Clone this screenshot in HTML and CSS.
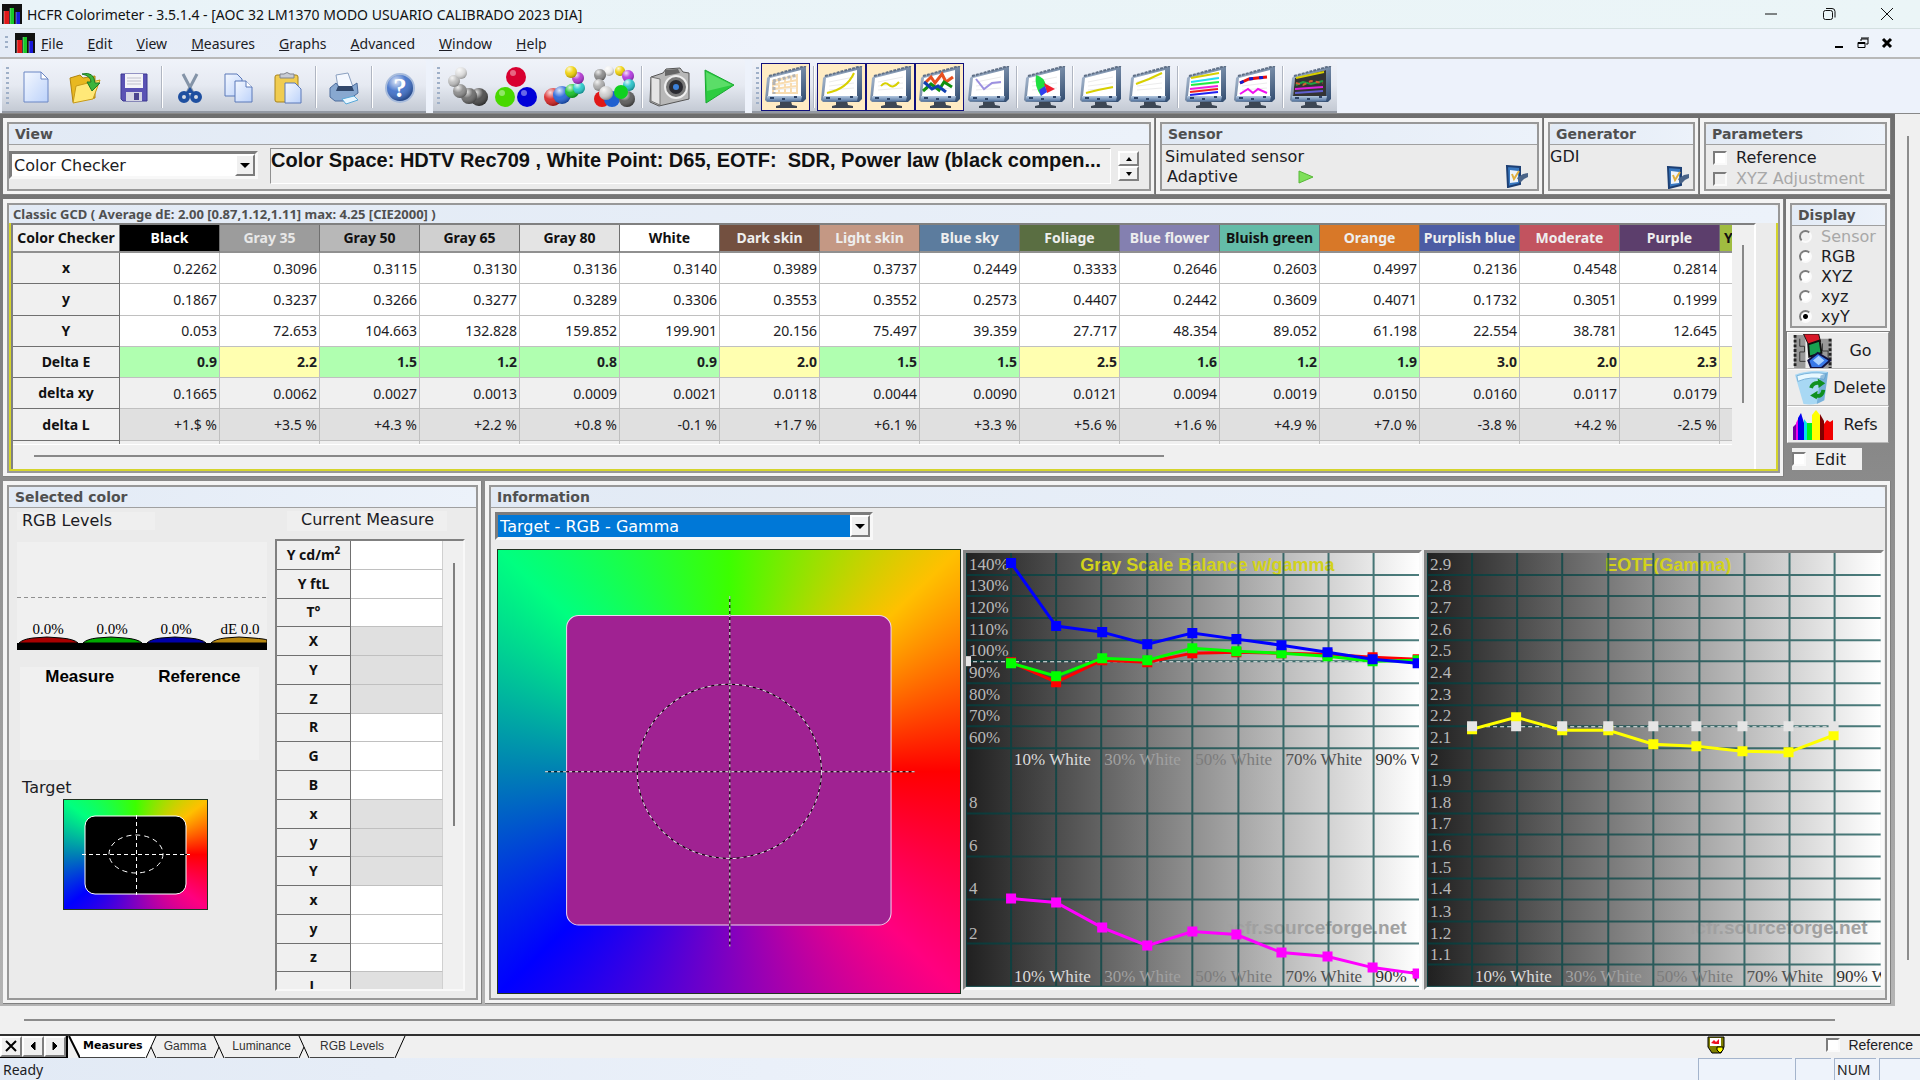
FILE: index.html
```html
<!DOCTYPE html>
<html lang="en">

<head>
	<meta charset="utf-8">
	<title>HCFR Colorimeter</title>
	<link rel="stylesheet" href="styles.css">
</head>

<body>

	<!-- shared drawings -->
	<svg class="defs" width="0" height="0" aria-hidden="true">
		<defs>
			<linearGradient id="steel" x1="0" y1="0" x2="1" y2="1">
				<stop offset="0" stop-color="#b9c9dd" />
				<stop offset="1" stop-color="#2f4a6e" />
			</linearGradient>
			<linearGradient id="bezel" x1="0" y1="0" x2="0" y2="1">
				<stop offset="0" stop-color="#b4c8e0" />
				<stop offset="1" stop-color="#5878a2" />
			</linearGradient>
			<linearGradient id="paper" x1="0" y1="0" x2="1" y2="1">
				<stop offset="0" stop-color="#f4f8ff" />
				<stop offset="1" stop-color="#bcd2fa" />
			</linearGradient>
			<linearGradient id="ramp">
				<stop offset="0" stop-color="#202020" />
				<stop offset="1" stop-color="#ffffff" />
			</linearGradient>
			<radialGradient id="shine" cx="0.35" cy="0.25" r="0.75">
				<stop offset="0" stop-color="#fff" stop-opacity="0.85" />
				<stop offset="0.5" stop-color="#fff" stop-opacity="0.1" />
				<stop offset="1" stop-color="#000" stop-opacity="0.3" />
			</radialGradient>
			<symbol id="logo" viewBox="0 0 20 20">
				<rect width="20" height="20" fill="#111" />
				<rect x="2" y="7" width="5" height="13" fill="#e01818" />
				<rect x="8" y="4" width="4" height="16" fill="#18c828" />
				<rect x="14" y="8" width="4" height="12" fill="#1818d8" />
				<path d="M2 7v13M8 4v16M14 8v12" stroke="#fff" stroke-opacity="0.4" />
			</symbol>
			<symbol id="monitor" viewBox="0 0 42 42">
				<path d="M15 35h11l1 4 5 1v2H11v-2l4-1z" fill="#3c4654" />
				<path d="M4 10L37 1l4-1v33l-3 3H2l-2-2 2-22z" fill="url(#steel)" />
				<path d="M4 10L37 1l4-1" fill="none" stroke="#5f6f86" stroke-width="2" stroke-dasharray="3 1" />
				<path d="M5 12L36 4v26H3z" fill="#fff" />
				<path d="M2 30h35l-1 5H2z" fill="url(#bezel)" />
				<path d="M5 32h4M17 33h3M29 31h3" stroke="#2c4366" stroke-width="2" />
				<path d="M8 16l25-5M8 20l25-3M8 24l25-2" stroke="#ececec" fill="none" />
			</symbol>
			<symbol id="device" viewBox="0 0 24 24">
				<path d="M2 2l13 1v17L3 23z" fill="#3878c0" stroke="#1c3f74" stroke-width="2" />
				<path d="M5 6l8 1v11l-8 1z" fill="#eef4fb" />
				<path d="M7 10l2 5 5-8" fill="none" stroke="#e0b040" stroke-width="2" />
				<path d="M12 14l6-4 5-1v4l-4 2-4 4z" fill="#4a6488" />
			</symbol>
		</defs>
	</svg>

	<header class="titlebar">
		<svg class="logo"><use href="#logo" /></svg>
		<h1>HCFR Colorimeter - 3.5.1.4 - [AOC 32 LM1370 MODO USUARIO CALIBRADO 2023 DIA]</h1>
		<div class="window-btns">
			<button aria-label="Minimize"><svg width="14" height="14"><path d="M1 7h12" stroke="#111" /></svg></button>
			<button aria-label="Restore"><svg width="14" height="14" fill="none" stroke="#111"><rect x="1.500" y="3.500" width="9" height="9" rx="2" /><path d="M4 1.500h6q3 0 3 3v6" /></svg></button>
			<button aria-label="Close"><svg width="14" height="14"><path d="M1 1l12 12M13 1L1 13" stroke="#111" /></svg></button>
		</div>
	</header>

	<nav class="menubar">
		<span class="grip"></span>
		<svg class="logo"><use href="#logo" /></svg>
		<a href="#"><u>F</u>ile</a>
		<a href="#"><u>E</u>dit</a>
		<a href="#"><u>V</u>iew</a>
		<a href="#"><u>M</u>easures</a>
		<a href="#"><u>G</u>raphs</a>
		<a href="#"><u>A</u>dvanced</a>
		<a href="#"><u>W</u>indow</a>
		<a href="#"><u>H</u>elp</a>
		<div class="mdi-btns">
			<button aria-label="Minimize document"><svg width="12" height="12"><path d="M2 10h8" stroke="#000" stroke-width="2" /></svg></button>
			<button aria-label="Restore document"><svg width="12" height="12" fill="none" stroke="#000"><path d="M4 4V2h7v5H9M4 1h8" /><path d="M1 5.500h7v5H1zM1 6.500h7" /></svg></button>
			<button aria-label="Close document"><svg width="12" height="12"><path d="M2 2l8 8M10 2l-8 8" stroke="#000" stroke-width="3" /></svg></button>
		</div>
	</nav>

	<div class="toolbar">
		<div class="tools">
			<span class="grip"></span>
			<button aria-label="New"><svg class="ico" viewBox="0 0 42 42"><path d="M9 6h17l7 7v23H9z" fill="url(#paper)" stroke="#6b86c4" /><path d="M26 6v7h7z" fill="#fff" stroke="#6b86c4" /></svg></button>
			<button aria-label="Open"><svg class="ico" viewBox="0 0 42 42"><path d="M6 12l10-3 3 3 12-2v22L9 36z" fill="#e8b820" stroke="#b08410" /><path d="M12 20l24-6-7 19-20 4z" fill="#ffe878" stroke="#c89a18" /><path d="M18 8q12-3 13 9h5l-8 8-5-9h4q0-6-9-8z" fill="#3cb43c" stroke="#1f7a24" /></svg></button>
			<button aria-label="Save"><svg class="ico" viewBox="0 0 42 42"><path d="M8 8h26v27H10l-2-2z" fill="#5a52b4" stroke="#3b3690" /><rect x="12" y="8" width="18" height="14" fill="#f4f4f8" /><path d="M14 12h14M14 15h14M14 18h14" stroke="#c0c0cc" /><rect x="13" y="26" width="16" height="9" fill="#d4d4e4" /><rect x="21" y="27" width="5" height="7" fill="#4a4490" /></svg></button>
			<span class="sep"></span>
			<button aria-label="Cut"><svg class="ico" viewBox="0 0 42 42"><path d="M14 8l10 19M28 8L18 27" stroke="#8494a8" stroke-width="3" /><g fill="none" stroke="#1e4fa0" stroke-width="4"><ellipse cx="15" cy="31" rx="4" ry="4" /><ellipse cx="27" cy="31" rx="4" ry="4" /></g><path d="M21 21l4 6h-8z" fill="#1e4fa0" /></svg></button>
			<button aria-label="Copy"><svg class="ico" viewBox="0 0 42 42"><path d="M7 8h12l5 5v17H7z" fill="url(#paper)" stroke="#5a78b8" /><path d="M17 15h11l6 6v15H17z" fill="url(#paper)" stroke="#5a78b8" /><path d="M28 15v6h6" fill="#fff" stroke="#5a78b8" /></svg></button>
			<button aria-label="Paste"><svg class="ico" viewBox="0 0 42 42"><rect x="8" y="9" width="23" height="27" rx="2" fill="#f0cc50" stroke="#a8841c" /><path d="M13 12V8h4q3-3 6 0h4v4z" fill="#c8ccd4" stroke="#80848c" /><path d="M18 17h10l6 6v14H18z" fill="url(#paper)" stroke="#5a78b8" /></svg></button>
			<span class="sep"></span>
			<button aria-label="Print"><svg class="ico" viewBox="0 0 42 42"><path d="M13 9l12-2 5 14H15z" fill="#f4f8ff" stroke="#8aa0c0" /><path d="M7 22l6-5 3 4h12l6-4 1 10-11 8H12l-5-4z" fill="#88a8d0" stroke="#4d6c9c" /><path d="M15 20h14l2 5H13z" fill="#31486c" /><path d="M19 33l12-3 4 4-12 4z" fill="#e8f6ff" stroke="#58a8d8" /></svg></button>
			<span class="sep"></span>
			<button aria-label="Help"><svg class="ico" viewBox="0 0 42 42"><circle cx="21" cy="22" r="14" fill="#3a6cc8" stroke="#a8bcdc" stroke-width="2" /><circle cx="21" cy="22" r="13" fill="url(#shine)" /><text x="21" y="31" class="help-mark">?</text></svg></button>
		</div>
		<div class="tools">
			<span class="grip"></span>
			<button aria-label="Measure grays"><svg class="ico" viewBox="0 0 42 42"><g fill="#444"><circle cx="33" cy="31" r="9" /></g><circle cx="33" cy="31" r="9" fill="url(#shine)" /><circle cx="23" cy="30" r="8" fill="#666" /><circle cx="23" cy="30" r="8" fill="url(#shine)" /><circle cx="14" cy="25" r="7" fill="#888" /><circle cx="14" cy="25" r="7" fill="url(#shine)" /><circle cx="8" cy="15" r="6" fill="#bbb" /><circle cx="8" cy="15" r="6" fill="url(#shine)" /><circle cx="15" cy="7" r="6" fill="#ddd" /><circle cx="15" cy="7" r="6" fill="url(#shine)" /></svg></button>
			<button aria-label="Measure primaries"><svg class="ico" viewBox="0 0 42 42"><circle cx="21" cy="11" r="10" fill="#d80030" /><circle cx="10" cy="31" r="10" fill="#48d800" /><circle cx="32" cy="31" r="10" fill="#0000d8" /><g fill="#fff" fill-opacity="0.4"><circle cx="18" cy="7" r="3" /><circle cx="7" cy="27" r="3" /><circle cx="29" cy="27" r="3" /></g></svg></button>
			<button aria-label="Measure secondaries"><svg class="ico" viewBox="0 0 42 42"><circle cx="9" cy="31" r="9" fill="#d82020" /><circle cx="9" cy="31" r="9" fill="url(#shine)" /><circle cx="18" cy="29" r="9" fill="#2060d8" /><circle cx="18" cy="29" r="9" fill="url(#shine)" /><circle cx="28" cy="25" r="7" fill="#10c020" /><circle cx="28" cy="25" r="7" fill="url(#shine)" /><circle cx="35" cy="22" r="6" fill="#20c8c8" /><circle cx="35" cy="22" r="6" fill="url(#shine)" /><circle cx="34" cy="12" r="6" fill="#b030d0" /><circle cx="34" cy="12" r="6" fill="url(#shine)" /><circle cx="27" cy="6" r="6" fill="#f0d000" /><circle cx="27" cy="6" r="6" fill="url(#shine)" /></svg></button>
			<button aria-label="Measure all"><svg class="ico" viewBox="0 0 42 42"><circle cx="16" cy="5" r="5" fill="#eee" /><circle cx="16" cy="5" r="5" fill="url(#shine)" /><circle cx="7" cy="9" r="6" fill="#888" /><circle cx="7" cy="9" r="6" fill="url(#shine)" /><circle cx="6" cy="19" r="6" fill="#aaa" /><circle cx="6" cy="19" r="6" fill="url(#shine)" /><circle cx="27" cy="5" r="5" fill="#f0d000" /><circle cx="27" cy="5" r="5" fill="url(#shine)" /><circle cx="35" cy="10" r="6" fill="#b030e0" /><circle cx="35" cy="10" r="6" fill="url(#shine)" /><circle cx="36" cy="19" r="6" fill="#20c0c8" /><circle cx="36" cy="19" r="6" fill="url(#shine)" /><circle cx="9" cy="33" r="8" fill="#e01818" /><circle cx="19" cy="33" r="8" fill="#2060d0" /><circle cx="34" cy="33" r="8" fill="#555" /><circle cx="34" cy="33" r="8" fill="url(#shine)" /><circle cx="13" cy="27" r="7" fill="#ccc" /><circle cx="13" cy="27" r="7" fill="url(#shine)" /><circle cx="28" cy="26" r="7" fill="#10d020" /></svg></button>
			<span class="sep"></span>
			<button aria-label="Snapshot"><svg class="ico" viewBox="0 0 42 42"><path d="M2 11l12-4 3-4 14-1 3 4 6 1v26l-30 7-9-4z" fill="#b8b8b8" stroke="#555" /><path d="M2 11l9 2v26l-9-4z" fill="#e4e4e4" stroke="#777" /><path d="M16 4l13-1 2 4-15 3z" fill="#666" /><circle cx="27" cy="21" r="11" fill="#777" stroke="#eee" stroke-width="2" /><circle cx="27" cy="21" r="7" fill="#2a2a30" /><circle cx="27" cy="21" r="3" fill="#3c80d8" /></svg></button>
			<button aria-label="Run"><svg class="ico" viewBox="0 0 42 42"><path d="M7 4l29 15-28 18z" fill="#2ccc40" stroke="#18a830" /><path d="M8 6l26 13L9 25z" fill="#7ce884" fill-opacity="0.6" /></svg></button>
		</div>
		<div class="tools">
			<span class="grip"></span>
			<button class="on" aria-label="Measures view"><svg class="ico" viewBox="0 0 42 42"><use href="#monitor" /><path d="M8 15l24-6v18H8zM8 19l24-5M8 23l24-3M14 14v13M20 12v15M26 11v16" fill="none" stroke="#f8dcb0" stroke-width="2" /><path d="M8 15l24-6M9 16v12" stroke="#b4b4b4" stroke-width="3" stroke-dasharray="3 2" /></svg></button>
			<span class="sep"></span>
			<button class="on" aria-label="Luminance"><svg class="ico" viewBox="0 0 42 42"><use href="#monitor" /><path d="M6 27q20-4 27-20" fill="none" stroke="#d8d000" stroke-width="2" /></svg></button>
			<button class="on" aria-label="Gamma"><svg class="ico" viewBox="0 0 42 42"><use href="#monitor" /><path d="M11 20q4-5 8-1t10-3" fill="none" stroke="#d8d000" stroke-width="2" /></svg></button>
			<button class="on" aria-label="RGB levels"><svg class="ico" viewBox="0 0 42 42"><use href="#monitor" /><path d="M6 17l6-6 4 6 7-9 4 8 7-5" fill="none" stroke="#e85020" stroke-width="3" /><path d="M4 25l8-7 8 6 5-8 8 5" fill="none" stroke="#109010" stroke-width="3" /><path d="M5 16l8 7 6-3 8 6" fill="none" stroke="#1040b0" stroke-width="3" /></svg></button>
			<button aria-label="Color temperature"><svg class="ico" viewBox="0 0 42 42"><use href="#monitor" /><path d="M8 13l8 10 8-6 9-1" fill="none" stroke="#9c90e0" stroke-width="2" /></svg></button>
			<span class="sep"></span>
			<button aria-label="CIE diagram"><svg class="ico" viewBox="0 0 42 42"><use href="#monitor" /><path d="M12 9q8 2 10 10L17 30q-7-10-5-21z" fill="#20e040" /><path d="M20 17l11 6-8 4z" fill="#f02030" /><path d="M15 24l6-4 2 6-6 4z" fill="#3040f0" /></svg></button>
			<span class="sep"></span>
			<button aria-label="Near black"><svg class="ico" viewBox="0 0 42 42"><use href="#monitor" /><path d="M6 27l12-3 15-3" fill="none" stroke="#d8d000" stroke-width="2" /></svg></button>
			<button aria-label="Near white"><svg class="ico" viewBox="0 0 42 42"><use href="#monitor" /><path d="M7 18l13-5 13-6" fill="none" stroke="#d8d000" stroke-width="2" /></svg></button>
			<span class="sep"></span>
			<button aria-label="Saturation luminance"><svg class="ico" viewBox="0 0 42 42"><use href="#monitor" /><g fill="none" stroke-width="2"><path d="M6 12l28-5" stroke="#d8d000" /><path d="M6 16l28-4" stroke="#20e0f0" /><path d="M6 19l28-3" stroke="#20f040" /><path d="M5 23l28-3" stroke="#f020e0" /><path d="M5 26l28-3" stroke="#f02020" /><path d="M5 29l28-3" stroke="#2020f0" /></g></svg></button>
			<button aria-label="Saturation shift"><svg class="ico" viewBox="0 0 42 42"><use href="#monitor" /><path d="M6 17l9-4 8-1 10-1" fill="none" stroke="#e81010" stroke-width="3" /><path d="M6 17l9-4 8-1 10-1" fill="none" stroke="#1020d0" stroke-width="3" stroke-dasharray="4 6" /><path d="M6 28l8-5 5 4 5-4 9 4" fill="none" stroke="#f010f0" stroke-width="2" /></svg></button>
			<span class="sep"></span>
			<button aria-label="Combined graphs"><svg class="ico" viewBox="0 0 42 42"><use href="#monitor" /><path d="M5 12L36 4v26H3z" fill="#333" /><g fill="none" stroke-width="2"><path d="M6 12l28-6" stroke="#d8d000" /><path d="M6 19l7-3 8 2 12-3" stroke="#20a040" /><path d="M6 17l7 2 8-4 12 2" stroke="#d06030" stroke-dasharray="4 3" /><path d="M5 23l28-2" stroke="#e020e0" /><path d="M5 27l28-2" stroke="#6060d0" /></g></svg></button>
		</div>
	</div>

	<div class="main">
		<div class="work">

			<div class="row-top">
				<section class="panel">
					<div class="group">
						<h2>View</h2>
						<div class="view-body">
							<div class="combo">
								<select aria-label="View"><option>Color Checker</option></select>
								<span class="combo-btn"><svg width="10" height="5"><path d="M0 0h10L5 5z" /></svg></span>
							</div>
							<p class="space-info">Color Space: HDTV Rec709 , White Point: D65, EOTF:&nbsp; SDR, Power law (black compen...</p>
							<div class="spin">
								<button aria-label="Up"><svg width="6" height="4"><path d="M0 4h6L3 0z" /></svg></button>
								<button aria-label="Down"><svg width="6" height="4"><path d="M0 0h6L3 4z" /></svg></button>
							</div>
						</div>
					</div>
				</section>
				<section class="panel">
					<div class="group">
						<h2>Sensor</h2>
						<div class="device-body">
							<div class="device-text">
								<p>Simulated sensor</p>
								<p class="adaptive">Adaptive <svg width="16" height="14"><path d="M1 1l14 6-14 6z" fill="#7ee05a" stroke="#58b838" /></svg></p>
							</div>
							<button class="flat" aria-label="Configure sensor"><svg width="24" height="24"><use href="#device" /></svg></button>
						</div>
					</div>
				</section>
				<section class="panel">
					<div class="group">
						<h2>Generator</h2>
						<div class="device-body gen-body">
							<div class="device-text">
								<p>GDI</p>
							</div>
							<button class="flat" aria-label="Configure generator"><svg width="24" height="24"><use href="#device" /></svg></button>
						</div>
					</div>
				</section>
				<section class="panel">
					<div class="group">
						<h2>Parameters</h2>
						<div class="param-body">
							<label><input type="checkbox"> Reference</label>
							<label class="off"><input type="checkbox" disabled> XYZ Adjustment</label>
						</div>
					</div>
				</section>
			</div>

			<div class="row-mid">
				<section class="panel">
					<div class="group">
						<h2 class="small">Classic GCD ( Average dE: 2.00 [0.87,1.12,1.11] max: 4.25 [CIE2000] )</h2>
						<div class="grid-body">
							<div class="grid-frame">
								<div class="grid-view">
									<table class="measures">
										<thead>
											<tr>
												<th>Color Checker</th>
												<th class="c-black">Black</th>
												<th class="c-g35">Gray 35</th>
												<th class="c-g50">Gray 50</th>
												<th class="c-g65">Gray 65</th>
												<th class="c-g80">Gray 80</th>
												<th class="c-white">White</th>
												<th class="c-dark">Dark skin</th>
												<th class="c-light">Light skin</th>
												<th class="c-sky">Blue sky</th>
												<th class="c-fol">Foliage</th>
												<th class="c-flower">Blue flower</th>
												<th class="c-bluish">Bluish green</th>
												<th class="c-orange">Orange</th>
												<th class="c-purplish">Purplish blue</th>
												<th class="c-mod">Moderate</th>
												<th class="c-purple">Purple</th>
												<th class="c-yg">Y</th>
											</tr>
										</thead>
										<tbody>
											<tr><th>x</th><td>0.2262</td><td>0.3096</td><td>0.3115</td><td>0.3130</td><td>0.3136</td><td>0.3140</td><td>0.3989</td><td>0.3737</td><td>0.2449</td><td>0.3333</td><td>0.2646</td><td>0.2603</td><td>0.4997</td><td>0.2136</td><td>0.4548</td><td>0.2814</td><td></td></tr>
											<tr><th>y</th><td>0.1867</td><td>0.3237</td><td>0.3266</td><td>0.3277</td><td>0.3289</td><td>0.3306</td><td>0.3553</td><td>0.3552</td><td>0.2573</td><td>0.4407</td><td>0.2442</td><td>0.3609</td><td>0.4071</td><td>0.1732</td><td>0.3051</td><td>0.1999</td><td></td></tr>
											<tr><th>Y</th><td>0.053</td><td>72.653</td><td>104.663</td><td>132.828</td><td>159.852</td><td>199.901</td><td>20.156</td><td>75.497</td><td>39.359</td><td>27.717</td><td>48.354</td><td>89.052</td><td>61.198</td><td>22.554</td><td>38.781</td><td>12.645</td><td></td></tr>
											<tr class="delta-e"><th>Delta E</th><td>0.9</td><td class="warn">2.2</td><td>1.5</td><td>1.2</td><td>0.8</td><td>0.9</td><td class="warn">2.0</td><td>1.5</td><td>1.5</td><td class="warn">2.5</td><td>1.6</td><td>1.2</td><td>1.9</td><td class="warn">3.0</td><td class="warn">2.0</td><td class="warn">2.3</td><td class="warn"></td></tr>
											<tr class="pale"><th>delta xy</th><td>0.1665</td><td>0.0062</td><td>0.0027</td><td>0.0013</td><td>0.0009</td><td>0.0021</td><td>0.0118</td><td>0.0044</td><td>0.0090</td><td>0.0121</td><td>0.0094</td><td>0.0019</td><td>0.0150</td><td>0.0160</td><td>0.0117</td><td>0.0179</td><td></td></tr>
											<tr class="dim"><th>delta L</th><td>+1.$ %</td><td>+3.5 %</td><td>+4.3 %</td><td>+2.2 %</td><td>+0.8 %</td><td>-0.1 %</td><td>+1.7 %</td><td>+6.1 %</td><td>+3.3 %</td><td>+5.6 %</td><td>+1.6 %</td><td>+4.9 %</td><td>+7.0 %</td><td>-3.8 %</td><td>+4.2 %</td><td>-2.5 %</td><td></td></tr>
											<tr class="pale"><th></th><td></td><td></td><td></td><td></td><td></td><td></td><td></td><td></td><td></td><td></td><td></td><td></td><td></td><td></td><td></td><td></td><td></td></tr>
										</tbody>
									</table>
								</div>
								<div class="grid-vscroll"><span></span></div>
								<div class="grid-hscroll"><span></span></div>
							</div>
						</div>
					</div>
				</section>
				<aside class="side">
					<div class="panel">
						<fieldset class="group">
							<h2>Display</h2>
							<div class="radio-body">
								<label class="off"><input type="radio" name="display" disabled> Sensor</label>
								<label><input type="radio" name="display"> RGB</label>
								<label><input type="radio" name="display"> XYZ</label>
								<label><input type="radio" name="display"> xyz</label>
								<label><input type="radio" name="display" checked> xyY</label>
							</div>
						</fieldset>
					</div>
					<button class="side-btn"><svg width="40" height="34" viewBox="0 0 40 36"><path d="M0 1h12v35H0zM28 5h12v31H28z" fill="#999" /><path d="M1 1v35M38 5v31" stroke="#222" stroke-width="3" stroke-dasharray="3 2" /><path d="M6 5v8h5v6H6v10h6M30 10v8h6v8h-6v8" fill="none" stroke="#333" /><path d="M10 0h16l2 8-13 3z" fill="#d81828" stroke="#111" /><path d="M15 11l12-4 2 13-13 4z" fill="#18a050" stroke="#111" stroke-width="2" /><path d="M15 28l10-8 13 8-9 8H18z" fill="#3878e8" stroke="#101040" stroke-width="2" /><path d="M20 28l6-5 6 5-6 5z" fill="#a8d0ff" /></svg><span>Go</span></button>
					<button class="side-btn"><svg width="38" height="34" viewBox="0 0 38 36"><path d="M1 4q16-6 35-3l-4 30q-9 6-22 4z" fill="#a8d8f4" /><path d="M3 5q16-5 31-2l-2 6q-14-4-28 2z" fill="#e8f8ff" stroke="#78b0d8" /><path d="M36 1l-4 30-8 4 4-30z" fill="#5898c8" fill-opacity="0.6" /><g fill="none" stroke="#109020" stroke-width="4"><path d="M18 18q2-7 10-5" /><path d="M31 20q-1 8-9 6" /></g><path d="M25 8l8 5-7 5zM25 21l-8 5 7 4z" fill="#109020" /></svg><span>Delete</span></button>
					<button class="side-btn"><svg width="40" height="30" viewBox="0 0 40 30"><path d="M0 30V17l3-3v16z" fill="#7000a0" /><path d="M3 30V13l2-4v21z" fill="#f000f0" /><path d="M5 30V8l3-5 3 10v17z" fill="#0000f0" /><path d="M11 30V9l3 4v17z" fill="#00e0f0" /><path d="M14 30V13h5v17z" fill="#00f020" /><path d="M19 30V5l4-5 4 5v25z" fill="#ff0" /><path d="M27 30V4l4 7v19z" fill="#800000" /><path d="M31 30V14l3-4 3 2 3-2v20z" fill="#f00000" /></svg><span>Refs</span></button>
					<label class="edit"><input type="checkbox"> Edit</label>
				</aside>
			</div>

			<div class="row-low">
				<section class="panel">
					<div class="group">
						<h2>Selected color</h2>
						<div class="sel-body">
							<div class="sel-left">
								<p class="tag rgb-tag">RGB Levels</p>
								<svg class="levels" viewBox="0 0 250 108">
									<path d="M0 55.500h250" stroke="#909090" stroke-dasharray="4 3" />
									<rect y="101" width="250" height="7" />
									<g stroke="#000">
										<path d="M2 101q4-4 14-5l14-1 14 1q13 1 17 5z" fill="#a80000" />
										<path d="M66 101q4-4 14-5l14-1 14 1q13 1 17 5z" fill="#00a800" />
										<path d="M130 101q4-4 14-5l14-1 14 1q13 1 17 5z" fill="#0000a8" />
										<path d="M194 101q4-4 14-5l14-1 14 1q13 1 14 2v3z" fill="#b88810" />
									</g>
									<g class="level-text">
										<text x="31" y="92">0.0%</text>
										<text x="95" y="92">0.0%</text>
										<text x="159" y="92">0.0%</text>
										<text x="223" y="92">dE 0.0</text>
									</g>
								</svg>
								<div class="compare"><span>Measure</span><span>Reference</span></div>
								<p class="tag">Target</p>
								<div class="wheel wheel-small">
									<svg viewBox="0 0 143 109" fill="none" stroke-width="1">
										<rect x="21" y="16" width="101" height="78" rx="10" fill="#000" stroke="#fff" />
										<path d="M18 54.500h108M72.500 15v80" stroke="#000" />
										<path d="M18 54.500h108M72.500 15v80" stroke="#fff" stroke-dasharray="4 3" />
										<ellipse cx="72" cy="54" rx="27" ry="19" stroke="#fff" stroke-dasharray="5 4" />
									</svg>
								</div>
							</div>
							<div class="sel-right">
								<p class="tag cur-tag">Current Measure</p>
								<div class="cur-frame">
									<div class="cur-view">
										<table class="current">
											<tbody>
												<tr><th>Y cd/m<sup>2</sup></th><td></td></tr>
												<tr><th>Y ftL</th><td></td></tr>
												<tr><th>T°</th><td></td></tr>
												<tr class="dim"><th>X</th><td></td></tr>
												<tr class="dim"><th>Y</th><td></td></tr>
												<tr class="dim"><th>Z</th><td></td></tr>
												<tr><th>R</th><td></td></tr>
												<tr><th>G</th><td></td></tr>
												<tr><th>B</th><td></td></tr>
												<tr class="dim"><th>x</th><td></td></tr>
												<tr class="dim"><th>y</th><td></td></tr>
												<tr class="dim"><th>Y</th><td></td></tr>
												<tr><th>x</th><td></td></tr>
												<tr><th>y</th><td></td></tr>
												<tr><th>z</th><td></td></tr>
												<tr class="dim"><th>L</th><td></td></tr>
											</tbody>
										</table>
									</div>
									<div class="cur-scroll"><span></span></div>
								</div>
							</div>
						</div>
					</div>
				</section>

				<section class="panel">
					<div class="group">
						<h2>Information</h2>
						<div class="info-body">
							<div class="combo combo-info">
								<select aria-label="Information"><option>Target - RGB - Gamma</option></select>
								<span class="combo-btn"><svg width="10" height="5"><path d="M0 0h10L5 5z" /></svg></span>
							</div>
							<div class="graphs">
								<div class="wheel">
									<svg viewBox="0 0 461 442" fill="none" stroke-width="1">
										<rect x="68.500" y="65.500" width="324" height="309" rx="12" fill="#a02292" stroke="#f0d8f0" />
										<path d="M47 221.500h369M231.500 46v350" stroke="#000" />
										<path d="M47 221.500h369M231.500 46v350" stroke="#fff" stroke-dasharray="3 3" />
										<ellipse cx="231" cy="221" rx="92" ry="87" stroke="#000" />
										<ellipse cx="231" cy="221" rx="92" ry="87" stroke="#f0d8f0" stroke-dasharray="4 3" />
									</svg>
								</div>

								<div class="chart">
									<svg viewBox="0 0 453 433">
										<rect width="453" height="433" fill="url(#ramp)" />
										<text class="mark" x="440" y="380">hcfr.sourceforge.net</text>
										<text class="chart-title" x="241" y="18">Gray Scale Balance w/gamma</text>
										<path class="lines" d="M0 22H453M0 43H453M0 65H453M0 87H453M0 108H453M0 130H453M0 152H453M0 173H453M0 195H453M0 260H453M0 303H453M0 346H453M0 390H453M0 433H453M0 0V433M45 0V433M90 0V433M135 0V433M181 0V433M226 0V433M272 0V433M317 0V433M362 0V433M407 0V433" />
										<g class="axis">
											<text x="3" y="17">140%</text>
											<text x="3" y="38">130%</text>
											<text x="3" y="60">120%</text>
											<text x="3" y="82">110%</text>
											<text x="3" y="103">100%</text>
											<text x="3" y="125">90%</text>
											<text x="3" y="147">80%</text>
											<text x="3" y="168">70%</text>
											<text x="3" y="190">60%</text>
											<text x="3" y="255">8</text>
											<text x="3" y="298">6</text>
											<text x="3" y="341">4</text>
											<text x="3" y="385">2</text>
											<text class="t10" x="48" y="212">10% White</text>
											<text class="t30" x="138" y="212">30% White</text>
											<text class="t50" x="229" y="212">50% White</text>
											<text class="t70" x="319" y="212">70% White</text>
											<text class="t90" x="409" y="212">90% W</text>
											<text class="t10" x="48" y="428">10% White</text>
											<text class="t30" x="138" y="428">30% White</text>
											<text class="t50" x="229" y="428">50% White</text>
											<text class="t70" x="319" y="428">70% White</text>
											<text class="t90" x="409" y="428">90% W</text>
										</g>
										<path d="M0 108.500H453" stroke="#f0f0f0" stroke-dasharray="4 3" />
										<rect y="103" width="5" height="10" fill="#e5e5e5" />
										<g class="serie red">
											<polyline points="45,109 90,129 136,107 181,109 226,100 270,99 315,100 361,101 406,104 451,106" />
											<path d="M40 104h10v10h-10zM85 124h10v10h-10zM131 102h10v10h-10zM176 104h10v10h-10zM221 95h10v10h-10zM265 94h10v10h-10zM310 95h10v10h-10zM356 96h10v10h-10zM401 99h10v10h-10zM446 101h10v10h-10z" />
										</g>
										<g class="serie green">
											<polyline points="45,110 90,123 136,105 181,107 226,95 270,98 315,100 361,103 406,108 451,107" />
											<path d="M40 105h10v10h-10zM85 118h10v10h-10zM131 100h10v10h-10zM176 102h10v10h-10zM221 90h10v10h-10zM265 93h10v10h-10zM310 95h10v10h-10zM356 98h10v10h-10zM401 103h10v10h-10zM446 102h10v10h-10z" />
										</g>
										<g class="serie blue">
											<polyline points="45,10 90,73 136,79 181,91 226,80 270,86 315,92 361,99 406,106 451,110" />
											<path d="M40 5h10v10h-10zM85 68h10v10h-10zM131 74h10v10h-10zM176 86h10v10h-10zM221 75h10v10h-10zM265 81h10v10h-10zM310 87h10v10h-10zM356 94h10v10h-10zM401 101h10v10h-10zM446 105h10v10h-10z" />
										</g>
										<g class="serie magenta">
											<polyline points="45,345 90,349 136,374 181,392 226,378 270,381 315,399 361,403 406,414 451,420" />
											<path d="M40 340h10v10h-10zM85 344h10v10h-10zM131 369h10v10h-10zM176 387h10v10h-10zM221 373h10v10h-10zM265 376h10v10h-10zM310 394h10v10h-10zM356 398h10v10h-10zM401 409h10v10h-10zM446 415h10v10h-10z" />
										</g>
									</svg>
								</div>

								<div class="chart">
									<svg viewBox="0 0 453 433">
										<rect width="453" height="433" fill="url(#ramp)" />
										<text class="mark" x="440" y="380">hcfr.sourceforge.net</text>
										<text class="chart-title" x="241" y="18">EOTF(Gamma)</text>
										<path class="lines" d="M0 22H453M0 43H453M0 65H453M0 87H453M0 108H453M0 130H453M0 152H453M0 173H453M0 195H453M0 217H453M0 238H453M0 260H453M0 281H453M0 303H453M0 325H453M0 346H453M0 368H453M0 390H453M0 411H453M0 433H453M0 0V433M45 0V433M90 0V433M135 0V433M181 0V433M226 0V433M272 0V433M317 0V433M362 0V433M407 0V433" />
										<g class="axis">
											<text x="3" y="17">2.9</text>
											<text x="3" y="38">2.8</text>
											<text x="3" y="60">2.7</text>
											<text x="3" y="82">2.6</text>
											<text x="3" y="103">2.5</text>
											<text x="3" y="125">2.4</text>
											<text x="3" y="147">2.3</text>
											<text x="3" y="168">2.2</text>
											<text x="3" y="190">2.1</text>
											<text x="3" y="212">2</text>
											<text x="3" y="233">1.9</text>
											<text x="3" y="255">1.8</text>
											<text x="3" y="276">1.7</text>
											<text x="3" y="298">1.6</text>
											<text x="3" y="320">1.5</text>
											<text x="3" y="341">1.4</text>
											<text x="3" y="363">1.3</text>
											<text x="3" y="385">1.2</text>
											<text x="3" y="406">1.1</text>
											<text class="t10" x="48" y="428">10% White</text>
											<text class="t30" x="138" y="428">30% White</text>
											<text class="t50" x="229" y="428">50% White</text>
											<text class="t70" x="319" y="428">70% White</text>
											<text class="t90" x="409" y="428">90% W</text>
										</g>
										<path d="M45 173.500H406" stroke="#f0f0f0" stroke-dasharray="4 3" />
										<g class="serie yellow">
											<polyline points="45,176 89,164 135,177 181,177 226,191 269,193 315,198 361,199 406,182" />
											<path d="M40 171h10v10h-10zM84 159h10v10h-10zM130 172h10v10h-10zM176 172h10v10h-10zM221 186h10v10h-10zM264 188h10v10h-10zM310 193h10v10h-10zM356 194h10v10h-10zM401 177h10v10h-10z" />
										</g>
										<path fill="#e5e5e5" d="M40 168h10v10h-10zM84 168h10v10h-10zM130 168h10v10h-10zM176 168h10v10h-10zM221 168h10v10h-10zM264 168h10v10h-10zM310 168h10v10h-10zM356 168h10v10h-10zM401 168h10v10h-10z" />
									</svg>
								</div>
							</div>
						</div>
					</div>
				</section>
			</div>
		</div>
		<div class="main-vscroll"><span></span></div>
	</div>
	<div class="main-hscroll"><span></span></div>

	<div class="tabbar">
		<div class="tab-nav">
			<button aria-label="Close tab"><svg width="12" height="12"><path d="M1 1l10 10M11 1L1 11" stroke="#000" stroke-width="2" /></svg></button>
			<button aria-label="Previous tab"><svg width="12" height="12"><path d="M8 2L4 6l4 4z" stroke="#000" /></svg></button>
			<button aria-label="Next tab"><svg width="12" height="12"><path d="M4 2l4 4-4 4z" stroke="#000" /></svg></button>
		</div>
		<nav class="tabs">
			<svg width="12" height="22"><path d="M1 0h11v22z" fill="#fff" /><path d="M1 0l11 22" stroke="#000" stroke-width="2" /></svg>
			<a class="active" href="#">Measures</a>
			<svg width="12" height="22"><path d="M0 0h11L1 22H0z" fill="#fff" /><path d="M11 0L1 22M6 11l5 11" stroke="#000" /></svg>
			<a href="#">Gamma</a>
			<svg width="12" height="22"><path d="M1 0l10 22M6 11L1 22" stroke="#000" stroke-width="1" /></svg>
			<a href="#">Luminance</a>
			<svg width="12" height="22"><path d="M1 0l10 22M6 11L1 22" stroke="#000" stroke-width="1" /></svg>
			<a class="last" href="#">RGB Levels</a>
			<svg width="12" height="22"><path d="M11 0L1 22" stroke="#000" /></svg>
		</nav>
		<svg class="tab-icon" width="18" height="18" viewBox="0 0 18 18"><path d="M1 1h16v10l-3 6H5L1 11z" fill="#808000" stroke="#000" /><rect x="3" y="2" width="11" height="8" fill="#fff" /><path d="M4 7l3-3 2 2 3-3v5H8z" fill="#f01020" /><path d="M10 11h6v3l-3 3-3-3z" fill="#ff0" stroke="#000" /></svg>
		<label class="tab-ref"><input type="checkbox"> Reference</label>
	</div>

	<footer class="status">
		<span class="ready">Ready</span>
		<span class="pane pane-a"></span>
		<span class="pane pane-b"></span>
		<span class="pane pane-c">NUM</span>
		<span class="pane pane-d"></span>
	</footer>

</body>

</html>
```
FILE: styles.css
```css
* {
	padding: 0;
	margin: 0;
	box-sizing: border-box;
}

body {
	display: flex;
	flex-direction: column;
	min-height: 100vh;
	font-family: "DejaVu Sans", sans-serif;
	font-size: 16px;
	color: #1c1c24;
	background-color: #f0f0f0;
	overflow-x: hidden;
}

svg {
	display: block;
	flex: none;
}

.defs {
	height: 0;
}

a {
	color: inherit;
	text-decoration: none;
}

button {
	display: flex;
	align-items: center;
	justify-content: center;
	border: none;
	background: none;
	font: inherit;
	color: inherit;
}

input {
	appearance: none;
	flex: none;
	width: 14px;
	height: 14px;
	border: 2px solid;
	border-color: #7c7c7c #fafafa #fafafa #7c7c7c;
	background-color: #fff;
}

input:disabled {
	background-color: #f0f0f0;
}

input[type=radio] {
	width: 13px;
	height: 13px;
	border-radius: 50%;
}

input[type=radio]:checked {
	background-image: radial-gradient(#000 0 2px, #fff 3px);
}

/* title and menu */
.titlebar {
	display: flex;
	align-items: center;
	height: 29px;
	padding-left: 2px;
	background: linear-gradient(90deg, #e9f3f8, #ebf5f7);
	border-bottom: 1px solid #d3dfe0;
}

.logo {
	width: 20px;
	height: 20px;
}

.titlebar h1 {
	flex: 1;
	margin-left: 5px;
	font-family: "Noto Sans", sans-serif;
	font-size: 14px;
	font-weight: normal;
	color: #111;
}

.window-btns button {
	width: 58px;
	height: 28px;
}

.window-btns {
	display: flex;
	margin-right: 4px;
}

.menubar {
	display: flex;
	align-items: center;
	height: 30px;
	padding-left: 5px;
	font-family: "Noto Sans", sans-serif;
	font-size: 14px;
	background: linear-gradient(90deg, #e4ebf6, #eef3fb 40%);
	border-bottom: 2px solid #b8b8b8;
}

.menubar .logo {
	margin-left: 7px;
	margin-right: -6px;
}

.menubar a {
	padding: 0 12px;
}

.menubar .grip {
	height: 14px;
}

.mdi-btns {
	display: flex;
	margin-left: auto;
	margin-right: 21px;
}

.mdi-btns button {
	width: 24px;
	height: 24px;
}

.grip {
	flex: none;
	width: 3px;
	height: 40px;
	background-image: repeating-linear-gradient(#9fb0c8 0 2px, transparent 2px 5px);
}

/* toolbar */
.toolbar {
	display: flex;
	gap: 7px;
	height: 55px;
	padding-left: 2px;
	background-color: #edf2fb;
	border-bottom: 1px solid #888;
}

.tools {
	display: flex;
	align-items: center;
	height: 54px;
	padding: 4px 2px 0 4px;
	background: linear-gradient(#f0f3fa 0%, #e6eaf2 50%, #c4cad4 100%);
	border-radius: 4px 4px 0 0;
	border-bottom: 2px solid #9399a3;
}

.tools .grip {
	margin-right: 2px;
}

.tools button {
	width: 49px;
	height: 48px;
	border: 1px solid transparent;
}

.tools button.on {
	background-color: #ffecc4;
	border-color: #10107c;
}

.ico {
	width: 42px;
	height: 42px;
}

.sep {
	width: 7px;
	height: 42px;
	background: linear-gradient(90deg, transparent 3px, #b0b6c2 3px 4px, #fff 4px 5px, transparent 5px);
}

.help-mark {
	font-family: "Liberation Serif", serif;
	font-size: 27px;
	font-weight: bold;
	fill: #fff;
	text-anchor: middle;
}

/* work area */
.main {
	display: flex;
	flex: 1;
}

.work {
	display: flex;
	flex-direction: column;
	flex: 1;
	min-width: 0;
	gap: 4px;
	padding: 4px 4px 2px 3px;
	background: linear-gradient(#6e6e6e, #8a8a8a 40%, #b4b4b4);
}

.main-vscroll {
	width: 25px;
	padding: 22px 0 46px 12px;
	background-color: #f0f0f0;
}

.main-vscroll span {
	display: block;
	width: 2px;
	height: 100%;
	background-color: #8c8c8c;
}

.main-hscroll {
	height: 28px;
	padding: 13px 85px 0 24px;
}

.main-hscroll span {
	display: block;
	height: 2px;
	background-color: #8c8c8c;
}

.row-top {
	display: grid;
	grid-template-columns: 1fr 387px 155px 191px;
	gap: 1px;
}

.row-mid {
	display: grid;
	grid-template-columns: 1fr 105px;
	gap: 2px;
}

.row-low {
	display: grid;
	grid-template-columns: 479px 1fr;
	gap: 3px;
	flex: 1;
}

.panel {
	display: flex;
	min-width: 0;
	padding: 4px 3px 3px 4px;
	background-color: #f4f4f4;
	border-right: 1px solid #808080;
	border-bottom: 1px solid #808080;
}

.group {
	display: flex;
	flex-direction: column;
	flex: 1;
	min-width: 0;
	border: 2px solid #989898;
	background-color: #ebebeb;
}

.group h2 {
	height: 21px;
	padding-left: 6px;
	line-height: 20px;
	font-size: 14px;
	color: #505050;
	white-space: nowrap;
	background: linear-gradient(90deg, #e2eaf5, #ecf2fa);
	border-bottom: 1px solid #a0a0a0;
	border-radius: 5px 5px 0 0;
}

.group h2.small {
	height: 18px;
	padding-left: 4px;
	line-height: 18px;
	font-family: "Noto Sans", sans-serif;
	font-size: 13px;
	border-bottom: none;
}

.combo {
	display: flex;
	height: 28px;
	border: 3px solid;
	border-color: #7c7c7c #f8f8f8 #f8f8f8 #7c7c7c;
	background-color: #fff;
}

.combo select {
	appearance: none;
	flex: 1;
	min-width: 0;
	padding-left: 2px;
	border: none;
	background: none;
	font: inherit;
	color: inherit;
}

.combo-btn {
	display: flex;
	align-items: center;
	justify-content: center;
	width: 20px;
	background-color: #f0f0f0;
	border: 2px solid;
	border-color: #fff #7c7c7c #7c7c7c #fff;
}

.view-body {
	display: flex;
	align-items: flex-start;
	height: 44px;
	padding: 3px 10px 0 0;
}

.view-body .combo {
	width: 249px;
	margin-top: 3px;
}

.space-info {
	flex: 1;
	min-width: 0;
	height: 36px;
	margin: 0 7px 0 12px;
	line-height: 22px;
	font-family: "Liberation Sans", sans-serif;
	font-size: 20px;
	font-weight: bold;
	color: #111;
	white-space: nowrap;
	overflow: hidden;
	background-color: #f0f0f0;
	border: 1px solid;
	border-color: #909090 #fff #fff #909090;
}

.spin {
	margin-top: 3px;
}

.spin button {
	width: 21px;
	height: 15px;
	background-color: #f0f0f0;
	border: 2px solid;
	border-color: #fff #808080 #808080 #fff;
}

.device-body {
	display: flex;
	align-items: flex-end;
	height: 44px;
	padding: 2px 8px 1px 3px;
}

.gen-body {
	padding-left: 0;
	padding-right: 3px;
	padding-bottom: 0;
}

.device-text {
	flex: 1;
	align-self: flex-start;
	line-height: 20px;
}

.adaptive {
	display: flex;
	align-items: center;
	gap: 60px;
	padding-left: 2px;
}

.param-body {
	padding: 2px 0 0 7px;
	line-height: 21px;
}

.param-body label {
	display: flex;
	align-items: center;
	gap: 9px;
	white-space: nowrap;
}

.off {
	color: #a8a8a8;
}

/* measures grid */
.grid-body {
	flex: 1;
	padding: 0 20px 0 0;
	border: 2px solid #d4d42c;
	border-top: none;
}

.grid-frame {
	display: grid;
	grid-template-columns: 1fr 22px;
	grid-template-rows: 220px 24px;
	height: 246px;
	background-color: #f0f0f0;
	border-left: 2px solid #808080;
	border-top: 2px solid #808080;
	border-right: 2px solid #fff;
}

.grid-view {
	overflow: hidden;
	border-bottom: 1px solid #fff;
}

table {
	border-collapse: separate;
	border-spacing: 0;
	table-layout: fixed;
	font-family: "Noto Sans", sans-serif;
	font-size: 14px;
}

.measures {
	width: 1807px;
	height: 247px;
}

.measures th:first-child {
	width: 107px;
}

.measures th {
	height: 28px;
	line-height: 18px;
	background-color: #f0f0f0;
	border-right: 1px solid #707070;
	border-bottom: 2px solid #909090;
	color: #111;
	white-space: nowrap;
}

.measures tbody th {
	border-bottom: 1px solid #707070;
}

.measures td {
	padding-right: 2px;
	text-align: right;
	background-color: #fff;
	border-right: 1px solid #c0c0c0;
	border-bottom: 1px solid #c0c0c0;
}

.measures .c-black { background-color: #000; color: #fff; }
.measures .c-g35 { background-color: #9c9c9c; color: #e8e8e8; }
.measures .c-g50 { background-color: #b8b8b8; }
.measures .c-g65 { background-color: #d0d0d0; }
.measures .c-g80 { background-color: #e4e4e4; }
.measures .c-white { background-color: #fff; }
.measures .c-dark { background-color: #735040; color: #eee; }
.measures .c-light { background-color: #c49884; color: #eee; }
.measures .c-sky { background-color: #5c7c9e; color: #eee; }
.measures .c-fol { background-color: #5a6e42; color: #eee; }
.measures .c-flower { background-color: #8480b0; color: #eee; }
.measures .c-bluish { background-color: #64bca8; }
.measures .c-orange { background-color: #d87828; color: #eee; }
.measures .c-purplish { background-color: #4c5ca4; color: #eee; }
.measures .c-mod { background-color: #c2535f; color: #eee; }
.measures .c-purple { background-color: #5c3e6c; color: #eee; }
.measures .c-yg { padding-left: 4px; text-align: left; background-color: #a0bc40; }

.measures .pale td {
	background-color: #f0f0f0;
}

.measures .dim td,
.current .dim td {
	background-color: #e0e0e0;
}

.measures .delta-e td {
	font-weight: bold;
	background-color: #b0ffb0;
}

.measures .delta-e .warn {
	background-color: #ffffb0;
}

.grid-vscroll {
	padding: 20px 0 0 10px;
}

.grid-vscroll span {
	display: block;
	width: 2px;
	height: 158px;
	background-color: #888;
}

.grid-hscroll {
	grid-column: 1 / 3;
	padding: 10px 590px 0 21px;
}

.grid-hscroll span {
	display: block;
	height: 2px;
	background-color: #888;
}

/* right column */
.side {
	display: flex;
	flex-direction: column;
}

.radio-body {
	display: flex;
	flex-direction: column;
	padding-left: 7px;
}

.radio-body label {
	display: flex;
	align-items: center;
	gap: 9px;
	height: 20px;
}

.side-btn {
	justify-content: flex-start;
	height: 37px;
	margin: 0 2px 0 1px;
	padding-left: 5px;
	background-color: #ececec;
	border: 1px solid;
	border-color: #fff #909090 #b8b8b8 #fff;
}

.side-btn span {
	flex: 1;
	text-align: center;
}

.edit {
	display: flex;
	align-items: center;
	gap: 9px;
	width: 70px;
	height: 22px;
	margin: 5px 0 0 6px;
	background-color: #f0f0f0;
}

/* selected color */
.sel-body {
	display: flex;
	flex: 1;
	padding: 3px 11px 4px 8px;
}

.sel-left {
	width: 250px;
}

.sel-right {
	display: flex;
	flex-direction: column;
	flex: 1;
	margin-left: 8px;
}

.tag {
	width: 138px;
	height: 18px;
	padding-left: 5px;
	line-height: 18px;
}

.rgb-tag {
	margin-top: 1px;
	background-color: #efefef;
}

.cur-tag {
	width: 160px;
	height: 20px;
	margin-left: 12px;
	margin-bottom: 8px;
	padding-left: 14px;
	background-color: #efefef;
	white-space: nowrap;
}

.levels {
	margin-top: 12px;
	background-color: #f0f0f0;
}

.level-text {
	font-family: "Liberation Serif", serif;
	font-size: 15px;
	text-anchor: middle;
}

.compare {
	display: grid;
	grid-template-columns: 1fr 1fr;
	height: 93px;
	margin: 17px 8px 19px 3px;
	text-align: center;
	line-height: 20px;
	font-family: "Liberation Sans", sans-serif;
	font-size: 17px;
	font-weight: bold;
	color: #000;
	background-color: #f0f0f0;
}

.wheel {
	border: 1px solid #223322;
	background: conic-gradient(#3cff00 0deg, #ffc000 46deg, #ff0000 90deg, #ff0080 134deg, #8000c0 180deg, #0000ff 226deg, #0080b4 270deg, #00ff80 314deg, #3cff00 360deg);
}

.wheel-small {
	width: 145px;
	margin: 2px 0 0 46px;
	background: conic-gradient(#3cff00 0deg, #ffc000 53deg, #ff0000 90deg, #ff0080 127deg, #8000c0 180deg, #0000ff 233deg, #0080b4 270deg, #00ff80 307deg, #3cff00 360deg);
}

.cur-frame {
	display: flex;
	height: 452px;
	background-color: #f0f0f0;
	border: 2px solid;
	border-color: #808080 #f8f8f8 #f8f8f8 #808080;
}

.cur-view {
	flex: 1;
	overflow: hidden;
}

.current {
	width: 100%;
	height: 460px;
}

.current th {
	width: 74px;
	line-height: 18px;
	color: #111;
	background-color: #f0f0f0;
	border-right: 1px solid #707070;
	border-bottom: 1px solid #707070;
}

.current td {
	background-color: #fff;
	border-right: 1px solid #d0d0d0;
	border-bottom: 1px solid #c0c0c0;
}

.current sup {
	font-size: 10px;
	line-height: 0;
}

.cur-scroll {
	width: 20px;
	padding: 22px 0 0 10px;
}

.cur-scroll span {
	display: block;
	width: 2px;
	height: 263px;
	background-color: #808080;
}

/* information */
.info-body {
	padding: 4px 1px 4px 4px;
}

.combo-info {
	width: 378px;
}

.combo-info select {
	color: #fff;
	background-color: #0078d7;
}

.graphs {
	display: grid;
	grid-template-columns: 463fr 459fr 459fr;
	gap: 2px;
	align-items: start;
	margin: 9px 0 0 2px;
}

.chart {
	margin-top: 1px;
	border: 3px solid;
	border-color: #848484 #fafafa #fafafa #848484;
}

.lines {
	fill: none;
	stroke: #004444;
	stroke-opacity: 0.7;
	stroke-width: 2;
}

.axis {
	font-family: "Liberation Serif", serif;
	font-size: 17px;
	fill: #b8b8b8;
}

.t10 { fill: #dadada; }
.t30 { fill: #a0a0a0; }
.t50 { fill: #7c7c7c; }
.t70 { fill: #505050; }
.t90 { fill: #303030; }

.chart-title {
	font-family: "Liberation Sans", sans-serif;
	font-size: 18px;
	font-weight: bold;
	text-anchor: middle;
	fill: #d2d21a;
}

.mark {
	font-family: "Liberation Sans", sans-serif;
	font-size: 19px;
	font-weight: bold;
	text-anchor: end;
	fill: #a0a0a0;
}

.serie polyline {
	fill: none;
	stroke-width: 3;
}

.red { fill: #f00; stroke: #f00; }
.green { fill: #0f0; stroke: #0f0; }
.blue { fill: #00f; stroke: #00f; }
.magenta { fill: #f0f; stroke: #f0f; }
.yellow { fill: #ff0; stroke: #ff0; }

.serie path {
	stroke: none;
}

/* bottom tabs and status */
.tabbar {
	display: flex;
	align-items: flex-start;
	height: 24px;
	padding-right: 7px;
	border-top: 2px solid #303030;
	font-family: "Liberation Sans", sans-serif;
	font-size: 12px;
}

.tab-nav {
	display: flex;
	width: 68px;
	border-right: 2px solid #000;
	border-bottom: 1px solid #000;
}

.tab-nav button {
	width: 22px;
	height: 21px;
	border: 2px solid;
	border-color: #fff #808080 #808080 #fff;
}

.tabs {
	display: flex;
	fill: none;
}

.tabs a {
	padding: 0 7px;
	line-height: 20px;
	color: #333;
	border-bottom: 1px solid #444;
}

.tabs a.active {
	padding: 0 2px 0 3px;
	font-family: "DejaVu Sans", sans-serif;
	font-size: 11px;
	font-weight: bold;
	color: #000;
	background-color: #fff;
}

.tabs a.last {
	padding: 0 10px;
}

.tab-icon {
	margin-left: auto;
	margin-right: 101px;
}

.tab-ref {
	display: flex;
	align-items: center;
	gap: 8px;
	line-height: 18px;
	font-size: 14px;
}

.status {
	display: flex;
	align-items: center;
	gap: 3px;
	height: 23px;
	padding-left: 3px;
	font-family: "Noto Sans", sans-serif;
	font-size: 14px;
	background: linear-gradient(90deg, #e2eaf5, #eef3fb 60%);
}

.ready {
	flex: 1;
}

.pane {
	height: 22px;
	line-height: 22px;
	padding-left: 2px;
	border-left: 1px solid #a4b4cc;
	border-top: 1px solid #a4b4cc;
}

.pane-a { width: 94px; }
.pane-b { width: 36px; }
.pane-c { width: 42px; }
.pane-d { width: 41px; }
```
